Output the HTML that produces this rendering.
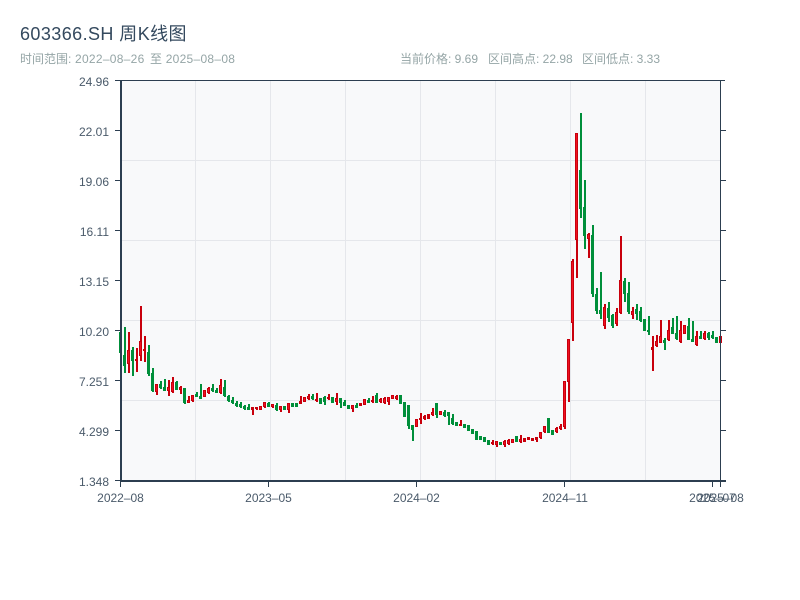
<!DOCTYPE html>
<html>
<head>
<meta charset="utf-8">
<title>603366.SH 周K线图</title>
<style>
html,body{margin:0;padding:0;background:#fff;width:800px;height:600px;overflow:hidden}
svg{display:block}
text{font-family:"Liberation Sans","WenQuanYi Zen Hei",sans-serif}
</style>
</head>
<body>
<svg width="800" height="600" viewBox="0 0 800 600" xmlns="http://www.w3.org/2000/svg">
<rect width="800" height="600" fill="#fff"/>
<text x="20" y="40" font-size="18" fill="#34495e" letter-spacing=".42">603366.SH 周K线图</text>
<text y="63" font-size="12" fill="#95a5a6"><tspan x="20">时间范围:</tspan><tspan x="75" letter-spacing=".28">2022–08–26</tspan><tspan x="150">至</tspan><tspan x="165.7" letter-spacing=".28">2025–08–08</tspan></text>
<text x="400" y="63" font-size="12" fill="#95a5a6">当前价格: 9.69</text>
<text x="488" y="63" font-size="12" fill="#95a5a6">区间高点: 22.98</text>
<text x="582" y="63" font-size="12" fill="#95a5a6">区间低点: 3.33</text>

<rect x="120" y="80" width="600" height="400" fill="#f8f9fa"/>
<g stroke="#e5e7eb" stroke-width="1" shape-rendering="crispEdges" fill="none">
<path d="M120 160.5H720M120 240.5H720M120 320.5H720M120 400.5H720"/>
<path d="M195.5 80V480M270.5 80V480M345.5 80V480M420.5 80V480M495.5 80V480M570.5 80V480M645.5 80V480"/>
</g>

<g fill="none" shape-rendering="crispEdges">
<g stroke="#008f3a" stroke-width="2">
<path d="M125 327V373M133 347V376M149 345V376M153 368V392M161 381V389M165 379V391M177 381V390M185 388V404M197 392V397M201 384V399M213 384V392M217 388V393M225 380V397M229 395V402M233 397V404M237 401V407M241 402V408M245 405V410M249 404V410M269 402V407M277 403V411M285 406V410M293 403V407M297 403V407M313 394V400M321 398V404M325 396V405M333 397V403M341 398V408M345 400V406M349 405V409M357 403V408M369 398V403M377 393V403M401 395V404M405 402V417M409 405V429M413 425V441M437 403V418M445 410V417M449 412V425M453 414V425M457 422V426M465 424V428M469 425V431M473 429V434M477 431V440M481 436V440M485 437V442M489 440V445M501 442V445M517 436V442M549 418V433M553 430V435M581 113V218M585 180V249M593 225V297M597 288V314M601 272V319M609 302V322M613 314V328M625 278V302M629 282V314M637 304V320M641 307V322M645 319V331M649 316V335M665 338V350M673 318V334M677 316V340M689 318V340M693 321V342M701 331V339M709 332V340M713 331V339M717 337V343"/>
</g>
<g stroke="#008f3a" stroke-width="3" transform="translate(-.5 0)">
<path d="M121 332V353M125 355V366M133 350V361M149 352V374M153 373V391M161 384V388M165 387V391M177 382V390M185 388V403M197 394V397M201 396V399M213 388V391M217 390V393M225 387V396M229 396V401M233 400V403M237 403V406M241 404V407M245 406V409M249 407V410M269 403V407M277 405V410M285 406V410M293 403V407M297 403V407M313 396V399M321 398V404M325 397V402M333 397V403M341 398V403M345 402V406M349 405V409M357 405V408M369 400V403M377 395V403M401 395V404M405 402V417M409 405V426M413 425V430M437 403V415M445 412V416M449 412V416M453 418V424M457 422V426M465 424V428M469 425V431M473 429V434M477 431V440M481 436V440M485 437V442M489 440V445M501 442V445M517 436V442M549 418V433M553 430V435M581 170V209M585 207V236M593 235V294M597 294V311M601 310V314M609 308V318M613 315V326M625 281V294M629 293V312M637 309V314M641 311V321M645 319V331M649 330V332M665 340V343M673 327V334M677 333V339M689 326V340M693 339V342M701 336V339M709 333V338M713 335V338M717 337V343"/>
</g>
<g stroke="#c8000c" stroke-width="2">
<path d="M129 332V373M137 348V372M141 306V361M145 336V362M157 384V395M169 380V396M173 377V393M181 386V394M189 396V403M193 395V402M205 390V397M209 387V394M221 379V394M253 407V415M257 407V410M261 406V410M265 402V408M273 404V408M281 406V412M289 403V413M301 396V404M305 397V402M309 394V400M317 393V402M329 394V400M337 393V405M353 405V412M361 403V406M365 399V405M373 396V403M381 398V403M385 397V404M389 397V405M393 395V399M397 395V400M417 419V427M421 413V424M425 415V420M429 414V419M433 408V416M441 411V415M461 420V426M493 440V445M497 441V447M505 440V447M509 439V445M513 439V443M521 435V443M525 438V442M529 437V440M533 438V441M537 437V442M541 432V439M545 426V433M557 427V433M561 424V430M565 381V429M569 339V402M573 259V341M577 133V278M589 233V258M605 304V329M617 308V326M621 236V314M633 307V319M653 336V371M657 335V347M661 320V343M669 320V341M681 321V343M685 325V334M697 331V346M705 331V340M721 336V343"/>
</g>
<g stroke="#c8000c" stroke-width="3" transform="translate(-.5 0)">
<path d="M129 350V364M137 359V361M141 341V356M145 349V351M157 384V392M169 387V391M173 382V392M181 387V390M189 400V403M193 395V401M205 390V397M209 388V393M221 385V393M253 407V410M257 407V409M261 406V410M265 402V407M273 404V407M281 406V410M289 403V410M301 401V404M305 397V402M309 396V399M317 399V401M329 397V399M337 398V402M353 405V409M361 403V406M365 399V405M373 400V402M381 399V402M385 398V403M389 397V402M393 395V399M397 396V399M417 419V427M421 418V420M425 416V419M429 414V419M433 412V415M441 411V415M461 424V426M493 442V444M497 441V445M505 441V445M509 440V444M513 439V443M521 439V442M525 438V442M529 437V440M533 438V441M537 437V440M541 432V438M545 426V432M557 428V432M561 426V429M565 381V427M569 339V382M573 261V323M577 133V240M589 234V239M605 307V326M617 312V324M621 280V313M633 311V315M653 347V350M657 341V346M661 336V343M669 330V340M681 330V342M685 325V334M697 336V345M705 333V339M721 336V343"/>
</g>
<g stroke="#f01020" stroke-width="1" transform="translate(-.5 0)">
<path d="M129 351V363M141 342V355M157 385V391M169 388V390M173 383V391M181 388V389M189 401V402M193 396V400M205 391V396M209 389V392M221 386V392M261 407V409M265 403V406M273 405V406M281 407V409M289 404V409M305 398V401M309 397V398M337 399V401M353 406V408M365 400V404M381 400V401M385 399V402M389 398V401M393 396V398M397 397V398M417 420V426M433 413V414M441 412V414M497 442V444M505 442V444M509 441V443M513 440V442M521 440V441M541 433V437M545 427V431M557 429V431M561 427V428M565 382V426M569 340V381M573 262V322M577 134V239M589 235V238M605 308V325M617 313V323M621 281V312M633 312V314M657 342V345M661 337V342M669 331V339M681 331V341M685 326V333M697 337V344M705 334V338"/>
</g>
</g>

<g shape-rendering="crispEdges" fill="#2c3e50">
<rect x="115" y="80" width="610" height="1"/>
<rect x="120" y="80" width="2" height="402"/>
<rect x="720" y="80" width="1" height="402"/>
<rect x="120" y="480" width="606" height="2"/>
<path d="M115 130h5v1h-5zM115 180h5v1h-5zM115 230h5v1h-5zM115 280h5v1h-5zM115 330h5v1h-5zM115 380h5v1h-5zM115 430h5v1h-5zM115 480h5v1h-5z"/>
<path d="M721 130h5v1h-5zM721 180h5v1h-5zM721 230h5v1h-5zM721 280h5v1h-5zM721 330h5v1h-5zM721 380h5v1h-5zM721 430h5v1h-5z"/>
<path d="M120 482h1v5h-1zM268 482h1v5h-1zM416 482h1v5h-1zM564 482h1v5h-1zM712 482h1v5h-1zM720 482h1v5h-1z"/>
</g>

<g font-size="12" fill="#4a5a6a" text-anchor="end">
<text x="109" y="86">24.96</text>
<text x="109" y="136">22.01</text>
<text x="109" y="186">19.06</text>
<text x="109" y="236">16.11</text>
<text x="109" y="286">13.15</text>
<text x="109" y="336">10.20</text>
<text x="109" y="386">7.251</text>
<text x="109" y="436">4.299</text>
<text x="109" y="486">1.348</text>
</g>
<g font-size="12" fill="#4a5a6a" text-anchor="middle">
<text x="120.5" y="502">2022–08</text>
<text x="268.5" y="502">2023–05</text>
<text x="416.5" y="502">2024–02</text>
<text x="565" y="502">2024–11</text>
<text x="712.5" y="502">2025–07</text>
<text x="720.5" y="502">2025–08</text>
</g>
</svg>
</body>
</html>
